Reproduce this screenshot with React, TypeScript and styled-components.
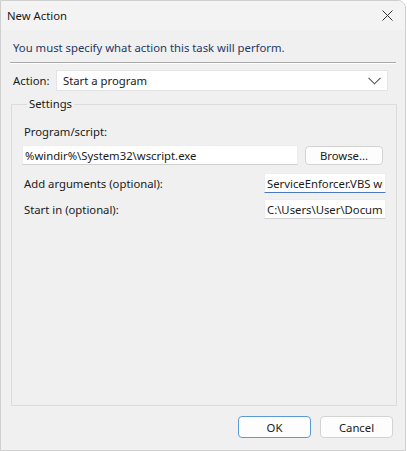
import React from 'react';
import styled, { createGlobalStyle } from 'styled-components';

const GlobalStyle = createGlobalStyle`
  html, body {
    margin: 0;
    padding: 0;
    background: #ffffff;
  }
  body {
    font-family: 'Noto Sans', 'Open Sans', sans-serif;
    font-size: 11.3px;
    color: #1a1a1a;
  }
  * {
    box-sizing: border-box;
  }
`;

const Window = styled.div`
  width: 406px;
  height: 451px;
  border: 1px solid #cfcfcf;
  border-top-right-radius: 8px;
  background: #f0f0f0;
  display: flex;
  flex-direction: column;
  overflow: hidden;
`;

const TitleBar = styled.div`
  height: 29px;
  display: flex;
  align-items: center;
  justify-content: space-between;
  padding: 0 8px 0 6px;
  background: #f3f3f3;
`;

const Title = styled.span`
  color: #1a1a1a;
`;

const CloseButton = styled.div`
  width: 20px;
  height: 20px;
  display: flex;
  align-items: center;
  justify-content: center;
`;

const Body = styled.div`
  flex: 1;
  display: flex;
  flex-direction: column;
  padding: 0 9px;
`;

const Heading = styled.div`
  padding: 10px 0 0 3px;
  height: 25px;
  color: #1e3966;
  line-height: 16px;
`;

const Separator = styled.div`
  margin-top: 7px;
  height: 2px;
  border-top: 1px solid #a9a9a9;
  border-bottom: 1px solid #ffffff;
`;

const ActionRow = styled.div`
  margin-top: 6px;
  display: flex;
  align-items: center;
`;

const ActionLabel = styled.span`
  width: 46px;
  padding-left: 3px;
`;

const Combo = styled.div`
  width: 332px;
  height: 21px;
  background: #fff;
  border: 1px solid #e4e4e4;
  display: flex;
  align-items: center;
  justify-content: space-between;
  padding: 0 6px;
`;

const Group = styled.fieldset`
  margin: 6px 0 0 1px;
  width: 386px;
  flex: 1;
  border: 1px solid #dcdcdc;
  padding: 12px 0 0 10px;
  display: flex;
  flex-direction: column;
`;

const Legend = styled.legend`
  padding: 0 2px;
  margin-left: 5px;
  line-height: 14px;
`;

const FieldLabel = styled.div`
  padding-left: 2px;
  height: 17px;
  line-height: 17px;
`;

const ProgramRow = styled.div`
  margin-top: 5px;
  display: flex;
  align-items: center;
  gap: 7px;
`;

const TextBox = styled.input<{ $width: number; $focused?: boolean }>`
  width: ${(p) => p.$width}px;
  height: 20px;
  background: #fff;
  border: 1px solid #ededed;
  border-bottom: 1px solid ${(p) => (p.$focused ? '#4a78c2' : '#d0d0d0')};
  font-family: inherit;
  font-size: inherit;
  color: #1a1a1a;
  padding: 0 2px;
  outline: none;
`;

const Button = styled.button<{ $default?: boolean; $wide?: boolean }>`
  width: ${(p) => (p.$wide ? 78 : 73)}px;
  height: ${(p) => (p.$wide ? 19 : 22)}px;
  background: #fdfdfd;
  border: 1px solid ${(p) => (p.$default ? '#5b9bd5' : '#d3d3d3')};
  border-radius: 4px;
  font-family: inherit;
  font-size: inherit;
  color: #1a1a1a;
  padding: 0;
`;

const OptionRow = styled.div<{ $first?: boolean }>`
  margin-top: ${(p) => (p.$first ? 8 : 6)}px;
  display: flex;
  align-items: center;
  justify-content: space-between;
  padding-right: 10px;
`;

const Footer = styled.div`
  height: 44px;
  display: flex;
  justify-content: flex-end;
  align-items: flex-start;
  gap: 9px;
  padding: 10px 3px 0 0;
`;

const ChevronIcon = () => (
  <svg width="13" height="8" viewBox="0 0 13 8">
    <path d="M0.5 0.8 L6.5 6.8 L12.5 0.8" fill="none" stroke="#555" strokeWidth="1.1" />
  </svg>
);

const CloseIcon = () => (
  <svg width="11" height="11" viewBox="0 0 11 11">
    <path d="M0.5 0.5 L10.5 10.5 M10.5 0.5 L0.5 10.5" fill="none" stroke="#333" strokeWidth="1" />
  </svg>
);

export default function App() {
  return (
    <>
      <GlobalStyle />
      <Window>
        <TitleBar>
          <Title>New Action</Title>
          <CloseButton>
            <CloseIcon />
          </CloseButton>
        </TitleBar>
        <Body>
          <Heading>You must specify what action this task will perform.</Heading>
          <Separator />
          <ActionRow>
            <ActionLabel>Action:</ActionLabel>
            <Combo>
              <span>Start a program</span>
              <ChevronIcon />
            </Combo>
          </ActionRow>
          <Group>
            <Legend>Settings</Legend>
            <FieldLabel>Program/script:</FieldLabel>
            <ProgramRow>
              <TextBox $width={276} readOnly value="%windir%\System32\wscript.exe" />
              <Button $wide>Browse...</Button>
            </ProgramRow>
            <OptionRow $first>
              <FieldLabel>Add arguments (optional):</FieldLabel>
              <TextBox $width={122} $focused readOnly value="ServiceEnforcer.VBS wuauserv" />
            </OptionRow>
            <OptionRow>
              <FieldLabel>Start in (optional):</FieldLabel>
              <TextBox $width={122} readOnly value="C:\Users\User\Documents" />
            </OptionRow>
          </Group>
          <Footer>
            <Button $default>OK</Button>
            <Button>Cancel</Button>
          </Footer>
        </Body>
      </Window>
    </>
  );
}
